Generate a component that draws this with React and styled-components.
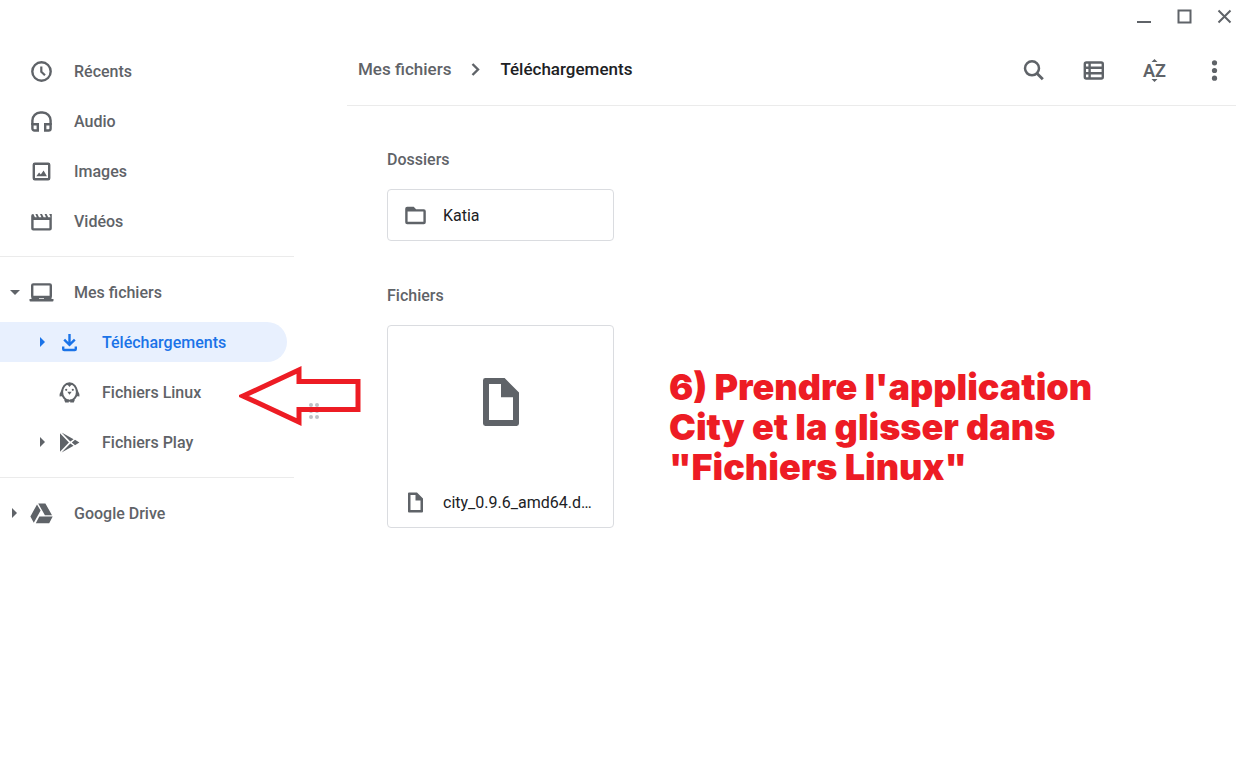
import React from 'react'
import styled, { createGlobalStyle, css } from 'styled-components'

const places = [
    { name: 'Récents', icon: 'clock' },
    { name: 'Audio', icon: 'audio' },
    { name: 'Images', icon: 'image' },
    { name: 'Vidéos', icon: 'video' },
]

const files = [
    { name: 'Mes fichiers', icon: 'laptop', expander: 'open' },
    { name: 'Téléchargements', icon: 'download', expander: 'closed', nested: true, active: true },
    { name: 'Fichiers Linux', icon: 'linux', nested: true },
    { name: 'Fichiers Play', icon: 'play', expander: 'closed', nested: true },
]

const cloud = [
    { name: 'Google Drive', icon: 'drive', expander: 'closed' },
]

const SortGlyph = () => (
    <>
        <path d="M9.5 4l3-3 3 3zM9.5 21l3 3 3-3z" />
        <SortText x="12.5" y="19" textAnchor="middle">AZ</SortText>
    </>
)

const icons = {
    clock: (
        <g fill="none" stroke="currentColor">
            <circle cx="12.5" cy="12.5" r="9.2" strokeWidth="2.4" />
            <path d="M12.3 7.5v5.3l3.7 3.4" strokeWidth="2.2" />
        </g>
    ),
    audio: (
        <g fill="none" stroke="currentColor" strokeWidth="2.4">
            <path d="M3.4 16v-4.5a8 8 0 0 1 8-8h2.2a8 8 0 0 1 8 8V16" />
            <path d="M3.4 15.2h5.4v6.3H5.4a2 2 0 0 1-2-2zM21.6 15.2h-5.4v6.3h3.4a2 2 0 0 0 2-2z" />
        </g>
    ),
    image: (
        <>
            <rect x="4.8" y="4.8" width="15.4" height="15.4" rx="1" fill="none" stroke="currentColor" strokeWidth="2.4" />
            <path d="M7.3 17.3l2.8-3.8 1.7 2 2.8-4 3.3 5.8z" />
        </>
    ),
    video: (
        <path d="M4.4 5H4a2 2 0 0 0-1.8 2v12.5a2 2 0 0 0 2 2h16.6a2 2 0 0 0 2-2V5h-2.6l1.4 3.2h-2.4L17.6 5h-2L17 8.200h-2.400L13 5h-2l1.400 3.200H10L8.400 5h-2l1.400 3.200H5.900zM4.600 11v8.200h15.800V11z" fillRule="evenodd" />
    ),
    laptop: (
        <>
            <rect x="3.2" y="4.4" width="18.6" height="12.6" rx="1" fill="none" stroke="currentColor" strokeWidth="2.4" />
            <path d="M2.5 16h20v3h2v1.500q0 1-1 1h-22q-1 0-1-1V19h2zM10 17.500V19h5v-1.500z" fillRule="evenodd" />
        </>
    ),
    download: (
        <g fill="none" stroke="currentColor" strokeWidth="2.4">
            <path d="M12.5 4v11M7.2 9.600l5.300 5.300 5.300-5.300" />
            <path d="M6.2 16.5v2.5q0 1 1 1h10.600q1 0 1-1v-2.500" />
        </g>
    ),
    linux: (
        <>
            <ellipse cx="12.5" cy="12" rx="7.4" ry="8.800" fill="none" stroke="currentColor" strokeWidth="2" />
            <path d="M5 9l-2.400 5v2.500L6 16zM20 9l2.400 5v2.500L19 16zM8.500 4.500q4-2.500 8 0-3 .3-4 2.500-1-2.200-4-2.500zM10.300 11.800h4.400l-2.200 3zM7 19.500h4.800v3H8.200zM13.200 19.500H18l-1.200 3h-3.600z" />
            <circle cx="9.2" cy="9.8" r="1.1" />
            <circle cx="15.8" cy="9.8" r="1.1" />
        </>
    ),
    play: (
        <path d="M3 3.200v18.600l8.900-9.300zM4.600 2.400l12 6.800-3.300 2.400zM4.600 22.600l12-6.800-3.300-2.400zM18 9.800l4.400 2.700-4.400 2.700-3.200-2.700z" />
    ),
    drive: (
        <path d="M8 3.400L1.400 15.500l3.400 6.300L11.600 9.600zM10.300 15.500l-3.500 6.700h13.400l3.500-6.700zM23 14.300L16.400 2.400H9.200l6.700 11.900z" />
    ),
    folder: (
        <path d="M4.2 3.800h6.500l2.400 2.400h7.700a2 2 0 0 1 2 2v11a2 2 0 0 1-2 2H4.200a2 2 0 0 1-2-2V5.800a2 2 0 0 1 2-2zM4.600 8.600v10.200h15.800V8.600z" fillRule="evenodd" />
    ),
    doc: (
        <path d="M5.500 2.500H14l6 6v13q0 1-1 1H6q-1 0-1-1V3.500q0-1 1-1zM7.500 5v15h10v-9.500h-5V5z" fillRule="evenodd" />
    ),
    search: (
        <g fill="none" stroke="currentColor">
            <circle cx="10" cy="10.300" r="7" strokeWidth="2.500" />
            <path d="M14.800 15.200l6 6" strokeWidth="2.800" />
        </g>
    ),
    list: (
        <g fill="none" stroke="currentColor" strokeWidth="2.400">
            <rect x="2.800" y="4.500" width="18" height="16" rx="1.500" />
            <path d="M7.600 4.500v16M2.800 9.800h18M2.800 15.200h18" />
        </g>
    ),
    more: (
        <>
            <circle cx="12.5" cy="4.8" r="2.6" />
            <circle cx="12.5" cy="12.5" r="2.6" />
            <circle cx="12.5" cy="20.2" r="2.6" />
        </>
    ),
    sort: <SortGlyph />,
    chevron: <path d="M9.5 7l5.500 5.500L9.500 18" fill="none" stroke="currentColor" strokeWidth="2.400" />,
    minimize: <path d="M5 18h14" fill="none" stroke="currentColor" strokeWidth="2" />,
    maximize: <rect x="6.500" y="6.500" width="12" height="12" fill="none" stroke="currentColor" strokeWidth="2" />,
    close: <path d="M6.500 6.500l12 12M18.500 6.500l-12 12" fill="none" stroke="currentColor" strokeWidth="2" />,
}

const Icon = ({ name, size = 25 }) => (
    <IconSvg viewBox="0 0 25 25" width={size} height={size} aria-hidden="true">
        {icons[name]}
    </IconSvg>
)

const NavList = ({ items }) => (
    <List>
        {items.map((item) => (
            <Row key={item.name} $nested={item.nested} $active={item.active}>
                <ExpanderSlot>
                    {item.expander && (
                        <Expander type="button" aria-label={`Développer ${item.name}`} aria-expanded={item.expander === 'open'}>
                            <Triangle $open={item.expander === 'open'} />
                        </Expander>
                    )}
                </ExpanderSlot>
                <RowLink href="#">
                    <Icon name={item.icon} />
                    <RowLabel>{item.name}</RowLabel>
                </RowLink>
            </Row>
        ))}
    </List>
)

const App = () => {
    return (
        <>
            <GlobalStyle />
            <Window>
                <TitleBar>
                    <WindowButton type="button" aria-label="Réduire"><Icon name="minimize" /></WindowButton>
                    <WindowButton type="button" aria-label="Agrandir"><Icon name="maximize" /></WindowButton>
                    <WindowButton type="button" aria-label="Fermer"><Icon name="close" /></WindowButton>
                </TitleBar>
                <Body>
                    <Sidebar>
                        <NavList items={places} />
                        <NavList items={files} />
                        <NavList items={cloud} />
                    </Sidebar>
                    <Splitter>
                        <Grip>
                            <Dot /><Dot /><Dot /><Dot /><Dot /><Dot />
                        </Grip>
                    </Splitter>
                    <Main>
                        <Header>
                            <Breadcrumb>
                                <Crumb href="#">Mes fichiers</Crumb>
                                <Icon name="chevron" />
                                <Crumb href="#" $current>Téléchargements</Crumb>
                            </Breadcrumb>
                            <Tools>
                                <ToolButton type="button" aria-label="Rechercher"><Icon name="search" /></ToolButton>
                                <ToolButton type="button" aria-label="Vue liste"><Icon name="list" /></ToolButton>
                                <ToolButton type="button" aria-label="Trier"><Icon name="sort" /></ToolButton>
                                <ToolButton type="button" aria-label="Plus"><Icon name="more" /></ToolButton>
                            </Tools>
                        </Header>
                        <Content>
                            <Section>
                                <SectionTitle>Dossiers</SectionTitle>
                                <Grid>
                                    <Card>
                                        <CardFooter>
                                            <Icon name="folder" />
                                            <FileName>Katia</FileName>
                                        </CardFooter>
                                    </Card>
                                </Grid>
                            </Section>
                            <Section>
                                <SectionTitle>Fichiers</SectionTitle>
                                <Grid>
                                    <Card>
                                        <Preview><Icon name="doc" size={60} /></Preview>
                                        <CardFooter>
                                            <Icon name="doc" />
                                            <FileName>city_0.9.6_amd64.deb</FileName>
                                        </CardFooter>
                                    </Card>
                                </Grid>
                            </Section>
                        </Content>
                    </Main>
                </Body>
                <Arrow viewBox="0 0 122 60" width="122" height="60" aria-hidden="true">
                    <path d="M4 30L60 4v11.500h59v28H60V56z" />
                </Arrow>
                <Note>
                    6) Prendre l'application<br />
                    City et la glisser dans<br />
                    "Fichiers Linux"
                </Note>
            </Window>
        </>
    )
}

export default App

const GlobalStyle = createGlobalStyle`
    *, *::before, *::after {
        box-sizing: border-box;
    }

    body {
        margin: 0;
        background: #fff;
        color: #5f6368;
        font-family: Roboto, 'Liberation Sans', sans-serif;
        font-size: 16px;
        line-height: 20px;
    }

    button {
        display: flex;
        align-items: center;
        justify-content: center;
        padding: 0;
        border: 0;
        background: none;
        color: inherit;
        font: inherit;
        cursor: pointer;
    }

    a {
        color: inherit;
        text-decoration: none;
    }
`;

const IconSvg = styled.svg`
    display: block;
    flex: none;
    fill: currentColor;
`;

const SortText = styled.text`
    font-family: Roboto, 'Liberation Sans', sans-serif;
    font-size: 18px;
    font-weight: 600;
`;

const Window = styled.div`
    position: relative;
    display: flex;
    flex-direction: column;
    min-height: 100vh;
    overflow: hidden;
`;

const TitleBar = styled.div`
    display: flex;
    align-items: flex-start;
    justify-content: flex-end;
    gap: 16px;
    height: 38px;
`;

const WindowButton = styled.button`
    width: 24px;
    height: 32px;
`;

const Body = styled.div`
    display: flex;
    flex: 1;
`;

const Sidebar = styled.nav`
    flex: none;
    width: 294px;
    padding-top: 13px;
`;

const List = styled.ul`
    display: flex;
    flex-direction: column;
    gap: 10px;
    margin: 0;
    padding: 0;
    list-style: none;

    & + & {
        margin-top: 15px;
        padding-top: 15px;
        border-top: 1px solid #ebebeb;
    }
`;

const Row = styled.li`
    display: flex;
    height: 40px;
    margin-right: 7px;
    padding-left: ${(props) => (props.$nested ? '28px' : '0')};
    border-radius: 0 20px 20px 0;
    font-weight: 500;

    ${(props) => props.$active && css`
        background: #e8f0fe;
        color: #1a73e8;
    `}
`;

const ExpanderSlot = styled.div`
    display: flex;
    flex: none;
    width: 29px;
`;

const Expander = styled.button`
    flex: 1;
`;

const Triangle = styled.span`
    border: 5px solid transparent;
    ${(props) => (props.$open
        ? css`border-top-color: currentColor; border-bottom-width: 0;`
        : css`border-left-color: currentColor; border-right-width: 0;`)}
`;

const RowLink = styled.a`
    display: flex;
    flex: 1;
    align-items: center;
    gap: 20px;
`;

const RowLabel = styled.span`
    padding-top: 2px;
`;

const Splitter = styled.div`
    display: flex;
    flex: none;
    align-items: center;
    width: 53px;
    padding-left: 15px;
`;

const Grip = styled.div`
    display: grid;
    grid-template-columns: 4px 4px;
    gap: 2px;
`;

const Dot = styled.span`
    height: 4px;
    border-radius: 50%;
    background: #bdc1c6;
`;

const Main = styled.main`
    flex: 1;
    min-width: 0;
`;

const Header = styled.header`
    display: flex;
    justify-content: space-between;
    padding: 12px 2px 15px 11px;
    border-bottom: 1px solid #ebebeb;
`;

const Breadcrumb = styled.nav`
    display: flex;
    align-items: center;
    gap: 12px;
    height: 38px;
`;

const Crumb = styled.a`
    color: ${(props) => (props.$current ? '#202124' : '#5f6368')};
    font-size: 17px;
    font-weight: 500;
`;

const Tools = styled.div`
    display: flex;
    gap: 20px;
`;

const ToolButton = styled.button`
    width: 40px;
    height: 40px;
`;

const Content = styled.div`
    display: flex;
    flex-direction: column;
    gap: 45px;
    padding: 44px 40px;
`;

const Section = styled.section`
    display: flex;
    flex-direction: column;
    gap: 19px;
`;

const SectionTitle = styled.h2`
    margin: 0;
    font-size: 16px;
    font-weight: 500;
    line-height: 20px;
`;

const Grid = styled.div`
    display: grid;
    grid-template-columns: repeat(auto-fill, 227px);
    gap: 20px;
`;

const Card = styled.article`
    border: 1px solid #dadce0;
    border-radius: 4px;
`;

const Preview = styled.div`
    display: flex;
    align-items: center;
    justify-content: center;
    height: 151px;
`;

const CardFooter = styled.div`
    display: flex;
    align-items: center;
    gap: 15px;
    height: 50px;
    padding: 0 16px 0 15px;
`;

const FileName = styled.span`
    overflow: hidden;
    padding-top: 2px;
    color: #202124;
    text-overflow: ellipsis;
    white-space: nowrap;
`;

const Arrow = styled.svg`
    position: absolute;
    top: 366px;
    left: 239px;
    fill: none;
    stroke: #ed1c24;
    stroke-width: 5px;
`;

const Note = styled.p`
    position: absolute;
    top: 367px;
    left: 669px;
    margin: 0;
    color: #ed1c24;
    font-family: Inter, 'Open Sans', sans-serif;
    font-size: 36px;
    font-weight: 900;
    line-height: 40px;
    white-space: nowrap;
`;
